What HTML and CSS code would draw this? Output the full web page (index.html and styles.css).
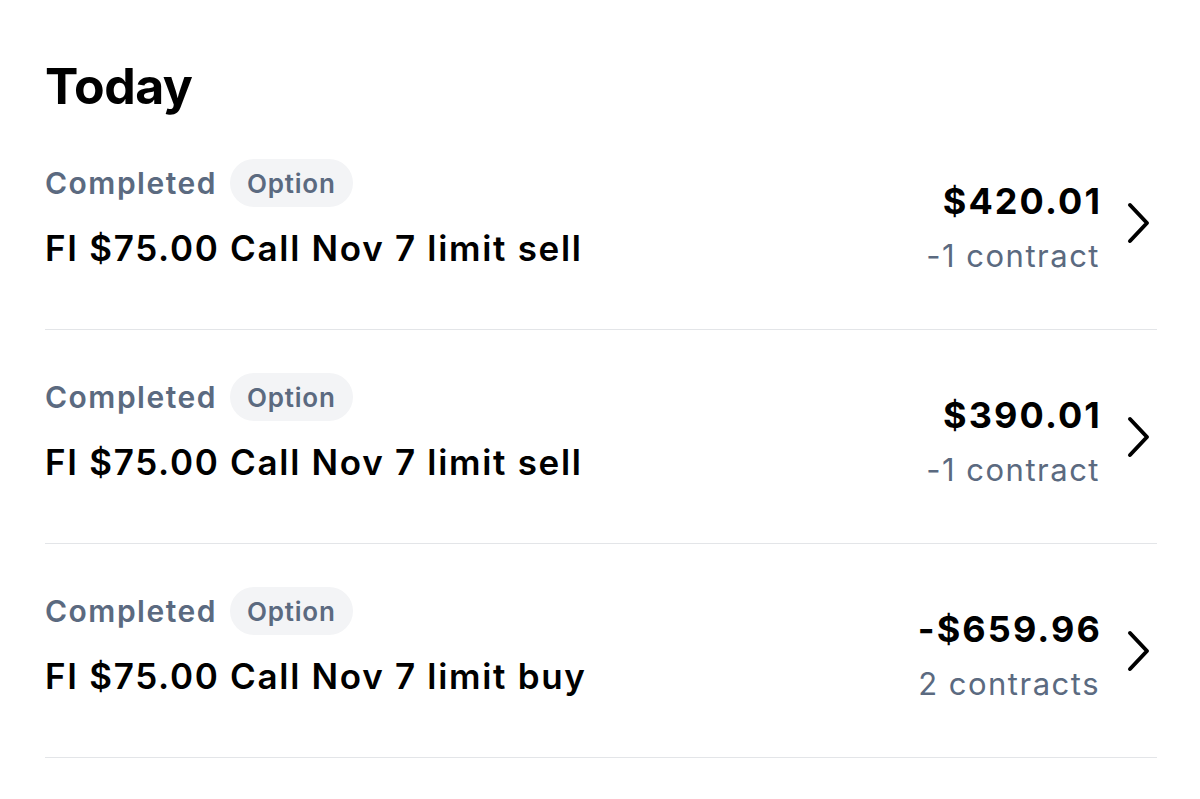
FILE: index.html
```html
<!DOCTYPE html>
<html lang="en">
<head>
<meta charset="utf-8">
<title>Today</title>
<link rel="stylesheet" href="styles.css">
</head>
<body>
<main class="page">
  <h1 class="heading">Today</h1>
  <ul class="list">
    <li class="row">
      <div class="info">
        <div class="meta"><span class="status">Completed</span><span class="pill">Option</span></div>
        <div class="title">FI $75.00 Call Nov 7 limit sell</div>
      </div>
      <div class="amounts">
        <div class="amount">$420.01</div>
        <div class="qty">-1 contract</div>
      </div>
      <svg class="chev" viewBox="0 0 26 42" width="26" height="42" aria-hidden="true"><path d="M4 3 L21 21 L4 39" fill="none" stroke="#000" stroke-width="4" stroke-linecap="round" stroke-linejoin="round"/></svg>
    </li>
    <li class="row">
      <div class="info">
        <div class="meta"><span class="status">Completed</span><span class="pill">Option</span></div>
        <div class="title">FI $75.00 Call Nov 7 limit sell</div>
      </div>
      <div class="amounts">
        <div class="amount">$390.01</div>
        <div class="qty">-1 contract</div>
      </div>
      <svg class="chev" viewBox="0 0 26 42" width="26" height="42" aria-hidden="true"><path d="M4 3 L21 21 L4 39" fill="none" stroke="#000" stroke-width="4" stroke-linecap="round" stroke-linejoin="round"/></svg>
    </li>
    <li class="row">
      <div class="info">
        <div class="meta"><span class="status">Completed</span><span class="pill">Option</span></div>
        <div class="title">FI $75.00 Call Nov 7 limit buy</div>
      </div>
      <div class="amounts">
        <div class="amount">-$659.96</div>
        <div class="qty">2 contracts</div>
      </div>
      <svg class="chev" viewBox="0 0 26 42" width="26" height="42" aria-hidden="true"><path d="M4 3 L21 21 L4 39" fill="none" stroke="#000" stroke-width="4" stroke-linecap="round" stroke-linejoin="round"/></svg>
    </li>
  </ul>
</main>
</body>
</html>
```
FILE: styles.css
```css
* { box-sizing: border-box; }
html, body { margin: 0; padding: 0; background: #fff; }
body {
  font-family: Inter, "Noto Sans", "Liberation Sans", sans-serif;
  color: #000;
}
.page {
  padding: 56px 43px 0 45px;
}
.heading {
  margin: 0;
  font-size: 50px;
  line-height: 60px;
  font-weight: 700;
  letter-spacing: -0.5px;
}
.list {
  list-style: none;
  margin: 0;
  padding: 0;
}
.row {
  display: flex;
  align-items: flex-start;
  padding: 43px 0 55px;
  border-bottom: 1px solid #e3e5e8;
}
.info {
  flex: 1;
  min-width: 0;
}
.meta {
  display: flex;
  align-items: center;
  gap: 13px;
  height: 48px;
  margin-bottom: 19px;
}
.status {
  font-size: 30px;
  font-weight: 600;
  letter-spacing: 1.5px;
  color: #5b6a80;
}
.pill {
  display: inline-flex;
  align-items: center;
  height: 48px;
  padding: 0 17px;
  border-radius: 24px;
  background: #f3f4f6;
  font-size: 26px;
  font-weight: 600;
  letter-spacing: 0.8px;
  color: #5b6a80;
}
.title {
  font-size: 35px;
  line-height: 44px;
  font-weight: 600;
  letter-spacing: 1.7px;
}
.amounts {
  text-align: right;
  margin-top: 24px;
}
.amount {
  font-size: 36px;
  line-height: 36px;
  font-weight: 700;
  letter-spacing: 2.1px;
  margin-right: -2px;
}
.qty {
  font-size: 31px;
  line-height: 36px;
  letter-spacing: 1.5px;
  color: #5b6a80;
  margin-top: 19px;
}
.chev {
  display: block;
  margin: 43px 5px 0 26px;
  flex: none;
}
```
